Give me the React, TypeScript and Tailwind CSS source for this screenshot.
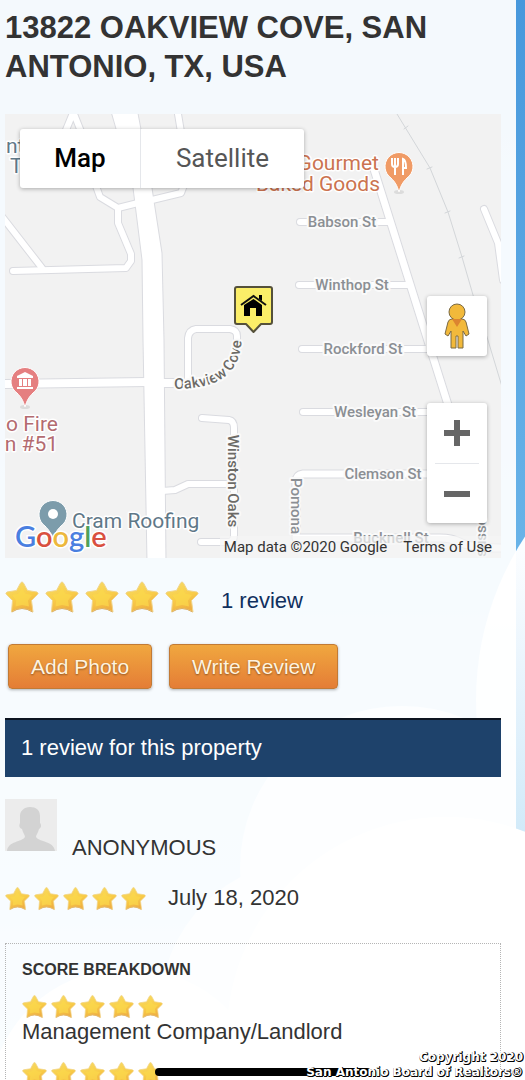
import React, { useId, useState } from 'react';

type MapMode = 'map' | 'satellite';

interface Score {
  id: string;
  label: string;
}

const scores: Score[] = [
  { id: 'management', label: 'Management Company/Landlord' },
  { id: 'other', label: '' },
];

// street centre lines, drawn twice: grey casing first, white on top
const roads: Array<{ d: string; width: number }> = [
  { d: 'M75 108 66 130 M74 114 82 134', width: 6 },
  { d: 'M96 186 100 197 118 208 138 203', width: 6 },
  { d: 'M118 208V223L131 254 131 261 126 268 13 271', width: 6 },
  { d: 'M0 214 42 268', width: 6 },
  { d: 'M152 200 181 193 186 180 M177 108 181 132', width: 6 },
  { d: 'M0 384 147 382 M162 383H188', width: 8 },
  { d: 'M188 382V338Q189 330 196 329H230Q237 330 237 336V345', width: 6 },
  { d: 'M202 418 229 420Q234 421 234 428V535Q234 542 228 542H201', width: 6 },
  { d: 'M162 491 175 490 188 484H232', width: 6 },
  { d: 'M372 163 449 408', width: 7 },
  { d: 'M300 222H388', width: 6 },
  { d: 'M299 285H408', width: 6 },
  { d: 'M302 349H430', width: 6 },
  { d: 'M303 412H440', width: 6 },
  { d: 'M440 474H303Q296 475 296 482V538H440Q452 538 462 543T501 548', width: 7 },
  { d: 'M484 209 498 243 503 280', width: 6 },
];

const streets = [
  { name: 'Babson St', x: 342, y: 227 },
  { name: 'Winthop St', x: 352, y: 290 },
  { name: 'Rockford St', x: 363, y: 354 },
  { name: 'Wesleyan St', x: 375, y: 417 },
  { name: 'Clemson St', x: 383, y: 479 },
  { name: 'Bucknell St', x: 391, y: 543 },
];

function Star({ className }: { className: string }) {
  const id = useId();
  return (
    <svg viewBox="0 0 34 34" className={className} aria-hidden="true">
      <defs>
        <linearGradient id={id} x1="0" y1="0" x2="0.4" y2="1">
          <stop offset="0" stopColor="#f6dc6a" />
          <stop offset="0.6" stopColor="#f9cd48" />
          <stop offset="1" stopColor="#efb043" />
        </linearGradient>
      </defs>
      <path
        d="M17 2Q18 2 19 4L22.5 10.5 32 12Q34 13 32.5 14.5L26.5 20.5 28 32Q22 28.5 17 28.5T6.5 32L7.5 20.5 1.5 14.5Q0 13 2 12L11.5 10.5 15 4Q16 2 17 2Z"
        fill={`url(#${id})`}
        stroke="#f1d58a"
        strokeWidth="1"
        strokeLinejoin="round"
      />
      <path
        d="M17 8 20.5 13.8 27 15 23 20.5 24 26.5 17 25 10.5 26.5 11.2 20.5 7 15 13.5 13.8Z"
        fill="#fbd94c"
        opacity="0.7"
      />
      <path d="M7 32Q12 28.5 17 28.5T27.5 32" fill="none" stroke="#cf9449" strokeWidth="1" opacity="0.6" />
    </svg>
  );
}

function Stars({ large = false }: { large?: boolean }) {
  return (
    <div role="img" aria-label="5 out of 5 stars" className={large ? 'flex gap-[6px]' : 'flex gap-1'}>
      {[1, 2, 3, 4, 5].map(n => (
        <Star key={n} className={large ? 'w-[34px] h-[34px]' : 'w-[25px] h-[25px]'} />
      ))}
    </div>
  );
}

function Pin({ x, y, color, children }: { x: number; y: number; color: string; children: React.ReactNode }) {
  return (
    <g transform={`translate(${x} ${y})`}>
      <ellipse cx="0" cy="26" rx="5" ry="2" fill="#dcdcdc" />
      <path
        d="M0 26C-2 19-4 16-8 12A14 14 0 1 1 8 12C4 16 2 19 0 26Z"
        fill={color}
        stroke="#fff"
        strokeWidth="1"
      />
      {children}
    </g>
  );
}

// sky and clouds behind the page panel
function Clouds() {
  return (
    <svg
      viewBox="0 0 525 1080"
      preserveAspectRatio="xMaxYMin slice"
      className="absolute inset-0 w-full h-full"
      aria-hidden="true"
    >
      <defs>
        <linearGradient id="sky" x1="0" y1="0" x2="0" y2="1">
          <stop offset="0" stopColor="#4798dc" />
          <stop offset="0.5" stopColor="#68b3e8" />
          <stop offset="1" stopColor="#9fd3f5" />
        </linearGradient>
        <linearGradient id="cloud" gradientUnits="userSpaceOnUse" x1="0" y1="550" x2="0" y2="835">
          <stop offset="0" stopColor="#fbfdff" />
          <stop offset="0.4" stopColor="#eaf5fd" />
          <stop offset="1" stopColor="#d1eaf9" />
        </linearGradient>
      </defs>
      <rect width="525" height="1080" fill="url(#sky)" />
      <circle cx="773" cy="700" r="297" fill="url(#cloud)" />
      <circle cx="402" cy="868" r="162" fill="#d6ecf9" />
      <path d="M516 706H525V831L516 834Z" fill="url(#cloud)" />
      <circle cx="310" cy="1010" r="150" fill="#d9eefa" />
      <circle cx="446" cy="1036" r="219" fill="#fff" />
      <circle cx="128" cy="1108" r="140" fill="#fff" />
    </svg>
  );
}

function StreetMap() {
  return (
    <svg
      viewBox="5 114 496 444"
      preserveAspectRatio="xMidYMid slice"
      className="block w-full h-full font-['Roboto',sans-serif]"
      aria-label="Map of Oakview Cove"
    >
      <rect x="5" y="114" width="496" height="444" fill="#f2f2f2" />
      <g fill="none" stroke="#dadbe0" strokeLinecap="round" strokeLinejoin="round">
        {roads.map(road => (
          <path key={road.d} d={road.d} strokeWidth={road.width + 2} />
        ))}
        <path d="M397 114 430 168 448 212 462 257 473 295 487 337 503 390" stroke="#d3d6d9" />
        <path
          d="M404 129 408 126 M427 169 432 167 M445 213 450 211 M459 258 464 256"
          stroke="#d3d6d9"
        />
      </g>
      <path
        d="M110 108 133 188 142 260 143 340 147 562H166L164 340 162 253 152 188 137 108Z"
        fill="#fff"
        stroke="#dadbe0"
      />
      <g fill="none" stroke="#fff" strokeLinecap="round" strokeLinejoin="round">
        {roads.map(road => (
          <path key={road.d} d={road.d} strokeWidth={road.width} />
        ))}
      </g>

      {/* Street names */}
      <g
        fill="#8b8f94"
        stroke="#fafafa"
        strokeWidth="4"
        strokeLinejoin="round"
        paintOrder="stroke"
        fontSize="15"
        fontWeight="500"
        textAnchor="middle"
      >
        {streets.map(street => (
          <text key={street.name} x={street.x} y={street.y}>
            {street.name}
          </text>
        ))}
        <text transform="translate(291 506) rotate(90)">Pomona</text>
        <text transform="translate(486 537) rotate(-90)">susse</text>
        <g fill="#6c6a66">
          <text transform="translate(228 481) rotate(90)">Winston Oaks</text>
          <path id="cove" d="M174 389C214 389 242 378 242 334" fill="none" stroke="none" />
          <text textAnchor="start">
            <textPath href="#cove">Oakview Cove</textPath>
          </text>
        </g>
      </g>

      {/* Places */}
      <g stroke="#fff" strokeWidth="3" strokeLinejoin="round" paintOrder="stroke" fontSize="21">
        <g fill="#cb7350" textAnchor="end">
          <text x="379" y="170">Gourmet</text>
          <text x="380" y="191">Baked Goods</text>
        </g>
        <g fill="#b36b70" textAnchor="end">
          <text x="58" y="431">o Fire</text>
          <text x="58" y="451">n #51</text>
        </g>
        <g fill="#5f7888">
          <text x="72" y="528">Cram Roofing</text>
          <text x="6" y="153">nt</text>
          <text x="10" y="173">T</text>
        </g>
      </g>
      <Pin x={399} y={166} color="#f09b66">
        <path
          d="M-7-8V-2Q-7 1-4 1V9M-4-8V0M-1-8V-2Q-1 1-4 1M4 9V-7Q7-6 7 2H4"
          fill="none"
          stroke="#fff"
          strokeWidth="2"
        />
      </Pin>
      <Pin x={25} y={381} color="#e57f80">
        <path d="M-8-3V-5L0-9 8-5V-3Z M-6-2H-3V5H-6Z M-2-2H2V5H-2Z M3-2H6V5H3Z M-8 6H8V8H-8Z" fill="#fff" />
      </Pin>
      <Pin x={53} y={514} color="#7c9cab">
        <circle r="5" fill="#fff" />
      </Pin>

      {/* Property marker */}
      <g transform="translate(234 286)">
        <path
          d="M3 1H36Q38 1 38 3V36Q38 38 36 38H27L19.5 46 12 38H3Q1 38 1 36V3Q1 1 3 1Z"
          fill="#fbee68"
          stroke="#55513a"
          strokeWidth="2"
          strokeLinejoin="round"
        />
        <path d="M7 19 19.5 10 32 19" fill="none" stroke="#111" strokeWidth="2" />
        <path d="M19.5 13 28 19V30H22V22H16V30H10V19Z M25 9H28V15L25 13Z" fill="#000" />
      </g>

      <text
        x="15"
        y="547"
        fontSize="29"
        fontWeight="600"
        className="font-['Lato',sans-serif]"
        stroke="#fff"
        strokeWidth="3"
        paintOrder="stroke"
      >
        <tspan fill="#4a7fe0">G</tspan>
        <tspan fill="#d9503f">o</tspan>
        <tspan fill="#edb83d">o</tspan>
        <tspan fill="#4a7fe0">g</tspan>
        <tspan fill="#4fa05a">l</tspan>
        <tspan fill="#d9503f">e</tspan>
      </text>
    </svg>
  );
}

function PropertyMap() {
  const [mode, setMode] = useState<MapMode>('map');

  return (
    <section className="relative h-[444px] mt-7 overflow-hidden font-['Roboto',sans-serif]">
      <StreetMap />

      <div className="absolute left-[15px] top-[15px] flex h-[59px] rounded-[3px] bg-white text-[26px] shadow-[0_1px_4px_rgba(0,0,0,0.3)]">
        <button
          type="button"
          aria-pressed={mode === 'map'}
          onClick={() => setMode('map')}
          className={`w-[121px] border-r border-gray-200 ${mode === 'map' ? 'font-medium text-black' : 'text-[#565656]'}`}
        >
          Map
        </button>
        <button
          type="button"
          aria-pressed={mode === 'satellite'}
          onClick={() => setMode('satellite')}
          className={`w-[163px] ${mode === 'satellite' ? 'font-medium text-black' : 'text-[#565656]'}`}
        >
          Satellite
        </button>
      </div>

      <button
        type="button"
        aria-label="Street View"
        className="absolute right-[14px] top-[182px] flex h-[60px] w-[60px] items-center justify-center rounded-[3px] bg-white shadow-[0_1px_4px_rgba(0,0,0,0.3)]"
      >
        <svg viewBox="0 0 26 46" className="w-[26px] h-[46px]">
          <g fill="#f2b93b" stroke="#7a6a45" strokeWidth="1" strokeLinejoin="round">
            <path d="M8 16H18Q21 16 22 19L25 31 22 33 19 28V45H14V33H12V45H7V28L4 33 1 31 4 19Q5 16 8 16Z" />
            <circle cx="13" cy="9" r="8" />
          </g>
          <path d="M8 16H18L13 24Z" fill="#dc8530" />
        </svg>
      </button>

      <div className="absolute right-[14px] bottom-[35px] flex w-[60px] flex-col items-center rounded-[3px] bg-white shadow-[0_1px_4px_rgba(0,0,0,0.3)]">
        <button type="button" aria-label="Zoom in" className="flex h-[60px] w-full items-center justify-center">
          <svg viewBox="0 0 26 26" className="w-[26px] h-[26px]">
            <path d="M0 13H26M13 0V26" stroke="#666" strokeWidth="6" />
          </svg>
        </button>
        <div className="h-px w-11 bg-gray-200" />
        <button type="button" aria-label="Zoom out" className="flex h-[59px] w-full items-center justify-center">
          <svg viewBox="0 0 26 26" className="w-[26px] h-[26px]">
            <path d="M0 13H26" stroke="#666" strokeWidth="6" />
          </svg>
        </button>
      </div>

      <div className="absolute right-0 bottom-0 flex gap-4 bg-[#f5f5f5]/70 pr-[9px] pl-1 text-[15px] leading-[22px] text-[#333]">
        <span>Map data ©2020 Google</span>
        <a href="#terms">Terms of Use</a>
      </div>
    </section>
  );
}

export default function App() {
  return (
    <div className="relative h-screen overflow-hidden font-['Liberation_Sans',Arial,sans-serif] text-[#333]">
      <Clouds />

      <main className="relative mr-[9px] min-h-full bg-white/94 pt-2 pr-[15px] pl-[5px]">
        <h1 className="text-[31px] leading-[39px] font-bold">13822 OAKVIEW COVE, SAN ANTONIO, TX, USA</h1>

        <PropertyMap />

        {/* Rating summary */}
        <div className="mt-[22px] flex items-center gap-[22px]">
          <Stars large />
          <a href="#reviews" className="pt-2 text-[22px] leading-[26px] text-[#10305e]">
            1 review
          </a>
        </div>

        <div className="mt-[30px] flex gap-[17px] px-[3px]">
          {['Add Photo', 'Write Review'].map(label => (
            <button
              key={label}
              type="button"
              className="h-[45px] rounded-[4px] border border-[#c27a35] bg-linear-to-b from-[#f0a73f] to-[#e47d36] px-[22px] text-[21px] text-[#fff3df] shadow-[0_1px_3px_rgba(0,0,0,0.3)] [text-shadow:0_1px_2px_rgba(0,0,0,0.4)]"
            >
              {label}
            </button>
          ))}
        </div>

        {/* Reviews */}
        <section id="reviews">
          <h2 className="mt-[29px] h-[59px] border-t-2 border-[#0d1420] bg-[#1e426b] px-4 text-[22px] leading-[56px] text-white">
            1 review for this property
          </h2>

          <article>
            <div className="mt-[22px] flex gap-[15px]">
              <svg viewBox="0 0 52 52" className="w-[52px] h-[52px]" aria-hidden="true">
                <rect width="52" height="52" fill="#ececec" />
                <path
                  d="M25 8C31 8 35 11 35 17V24C37 26 36 29 34 30C33 34 31 36 31 38C34 43 49 42 50 52H2C3 42 17 43 20 38C20 36 18 34 17 30C14 29 14 26 15 24V17C15 12 19 8 25 8Z"
                  fill="#d3d3d3"
                />
              </svg>
              <p className="pt-9 text-[22px] leading-[26px]">ANONYMOUS</p>
            </div>

            <div className="mt-6 flex items-center gap-[22px] text-[22px] leading-[26px]">
              <Stars />
              <time dateTime="2020-07-18">July 18, 2020</time>
            </div>

            <div className="mt-8 border border-dotted border-[#b5b5b5] px-4 pt-4">
              <h3 className="text-[16px] leading-5 font-bold">SCORE BREAKDOWN</h3>
              <ul className="mt-[14px]">
                {scores.map(score => (
                  <li key={score.id} className="h-[67px] text-[22px] leading-[26px]">
                    <Stars />
                    {score.label}
                  </li>
                ))}
              </ul>
            </div>
          </article>
        </section>
      </main>

      <div className="absolute bottom-1 left-1/2 h-2 w-[216px] -translate-x-1/2 rounded-full bg-black" />
      <p className="absolute right-[2px] bottom-0 text-right font-['DejaVu_Sans',sans-serif] text-[12px] leading-[15px] font-bold text-white [text-shadow:1px_1px_0_#000,1px_0_0_#000,0_1px_0_#000]">
        Copyright 2020
        <br />
        San Antonio Board of Realtors®
      </p>
    </div>
  );
}
